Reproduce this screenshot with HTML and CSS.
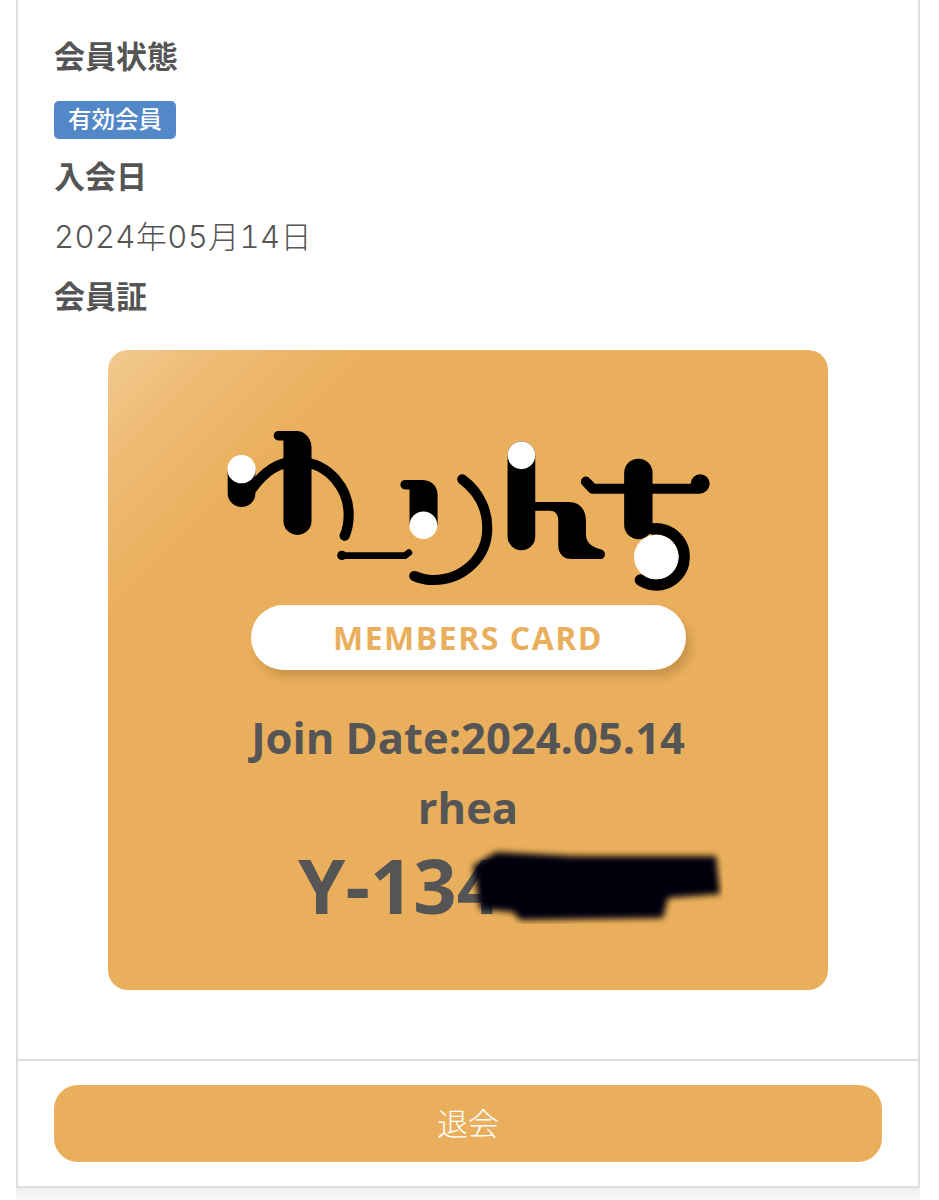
FILE: index.html
```html
<!DOCTYPE html>
<html lang="ja">
<head>
<meta charset="utf-8">
<title>会員情報</title>
<link rel="stylesheet" href="styles.css">
</head>
<body>
<main class="panel">
  <section class="panel-body">
    <h2 class="label">会員状態</h2>
    <div class="status-row"><span class="badge">有効会員</span></div>
    <h2 class="label">入会日</h2>
    <p class="value">2024年05月14日</p>
    <h2 class="label">会員証</h2>
    <div class="card">
      <svg class="logo" viewBox="9 0 1568 562" width="530" height="190" aria-label="ゆりんち">
        <g fill="none" stroke="#000" stroke-linecap="round" stroke-linejoin="round">
          <path d="M155 232 C195 175 245 150 295 153 C385 158 440 235 440 310 C440 335 436 355 428 372" stroke-width="30"/>
          <path d="M123 178 V246" stroke-width="82"/>
          <path d="M420 431 H606 L618 422" stroke-width="20"/>
          <path d="M776 205 C830 245 850 300 850 350 C850 435 780 503 690 503 C670 503 650 498 634 491" stroke-width="30"/>
          <path d="M951 134 V374" stroke-width="82"/>
          <path d="M1142 212 L1162 233 H1478" stroke-width="30"/>
          <path d="M1297 186 V340" stroke-width="84"/>
          <path d="M1340 352 A83 83 0 1 1 1303 503" stroke-width="34"/>
        </g>
        <g fill="#000">
          <circle cx="420" cy="430" r="14"/>
          <circle cx="1480" cy="218" r="28"/>
          <path d="M232 62 H285 C312 62 330 85 330 110 V328 A41.5 41.5 0 0 1 247 328 V90 H232 A14 14 0 0 1 232 62 Z"/>
          <path d="M607 207 H655 C685 207 703 225 703 250 V340 H620 V235 H607 A14 14 0 0 1 607 207 Z"/>
          <path d="M985 272 H1090 C1125 272 1142 295 1142 330 V370 C1142 395 1165 408 1185 412 C1205 416 1200 441 1185 441 H1100 C1075 441 1060 425 1060 400 V325 C1060 308 1050 298 1035 298 H985 Z"/>
        </g>
        <g fill="#fff">
          <circle cx="123" cy="175" r="42"/>
          <circle cx="661" cy="341" r="41"/>
          <circle cx="951" cy="134" r="41"/>
          <circle cx="1350" cy="435" r="66"/>
        </g>
      </svg>
      <div class="pill">MEMBERS CARD</div>
      <p class="card-line">Join Date:2024.05.14</p>
      <p class="card-line">rhea</p>
      <div class="member-no">
        <span>Y-134</span>
        <svg class="redact" viewBox="0 0 260 80" width="260" height="80" aria-hidden="true">
          <defs><filter id="soft" x="-5%" y="-10%" width="110%" height="120%"><feGaussianBlur stdDeviation="3"/></filter></defs>
          <path d="M10 22 L33 8 L110 12 L253 12 L257 50 L205 54 L200 74 L57 76 L50 68 L17 65 Z" fill="#02020a" filter="url(#soft)"/>
        </svg>
      </div>
    </div>
  </section>
  <footer class="panel-foot">
    <button class="leave" type="button">退会</button>
  </footer>
</main>
<div class="page-end"></div>
</body>
</html>
```

FILE: styles.css
```css
* { box-sizing: border-box; }
html, body { margin: 0; padding: 0; background: #fff; }
body {
  height: 1200px;
  overflow: hidden;
  color: #555;
  font-family: "Noto Sans CJK JP", "Liberation Sans", sans-serif;
}
.panel {
  margin: 0 19px 0 16px;
  height: 1188px;
  display: flex;
  flex-direction: column;
  border-left: 2px solid #dedede;
  border-right: 2px solid #dedede;
  border-bottom: 2px solid #dedede;
  background: #fff;
}
.panel-body {
  height: 1061px;
  flex: none;
  padding: 31px 36px 0;
  border-bottom: 2px solid #dedede;
}
.label {
  margin: 0 0 13px;
  font-size: 31px;
  line-height: 47px;
  font-weight: 700;
  color: #555;
}
.status-row {
  height: 47px;
  margin-bottom: 13px;
  padding-top: 10px;
}
.value {
  margin: 0 0 11px;
  padding-top: 2px;
  font-family: "Inter", "Noto Sans CJK JP", sans-serif;
  font-size: 31px;
  line-height: 47px;
  font-weight: 300;
  font-variant-numeric: tabular-nums;
  letter-spacing: 0.4px;
  color: #555;
}
.badge {
  display: block;
  width: 122px;
  height: 38px;
  border-radius: 5px;
  background: #5288c8;
  color: #fff;
  font-size: 23.5px;
  font-weight: 500;
  line-height: 35px;
  text-align: center;
}
.card {
  width: 720px;
  height: 640px;
  margin: 32px auto 0;
  padding-top: 60px;
  border-radius: 20px;
  background: linear-gradient(135deg, #f1ca8e 0%, #eeba74 9%, #eaaf5c 20%, #eaaf5c 100%);
  display: flex;
  flex-direction: column;
  align-items: center;
  font-family: "Open Sans", "Liberation Sans", sans-serif;
  color: #555;
}
.logo { display: block; flex: none; }
.pill {
  width: 435px;
  height: 65px;
  margin: 5px 0 33px;
  border-radius: 33px;
  background: #fff;
  box-shadow: 5px 7px 8px rgba(90, 60, 20, .22);
  color: #eaaf5c;
  font-size: 32px;
  font-weight: 700;
  line-height: 65px;
  letter-spacing: 1.5px;
  text-align: center;
}
.card-line {
  margin: 0;
  font-size: 43.5px;
  font-weight: 700;
  line-height: 70px;
  text-align: center;
}
.member-no {
  position: relative;
  width: 420px;
  margin-top: -2px;
  margin-left: 80px;
  font-size: 76px;
  font-weight: 700;
  line-height: 88px;
}
.redact {
  position: absolute;
  left: 165px;
  top: 3px;
}
.panel-foot {
  flex: 1;
  padding: 24px 36px;
}
.leave {
  display: block;
  width: 100%;
  height: 77px;
  padding: 0 0 4px;
  border: 0;
  border-radius: 24px;
  background: #eaaf5c;
  color: #fff;
  font-family: "Noto Sans CJK JP", "Liberation Sans", sans-serif;
  font-size: 31px;
  font-weight: 300;
}
.page-end {
  margin: 0 19px 0 16px;
  height: 12px;
  background: linear-gradient(#efefef, #f8f8f8);
}
```
